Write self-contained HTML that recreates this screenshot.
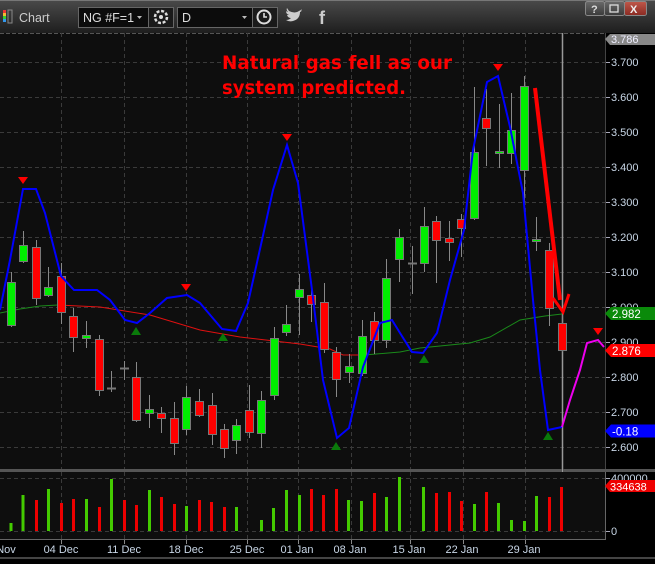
<!DOCTYPE html>
<html><head><meta charset="utf-8"><style>
html,body{margin:0;padding:0;background:#000;}
body{width:655px;height:559px;overflow:hidden;font-family:"Liberation Sans",sans-serif;}
</style></head><body>
<svg width="655" height="559" viewBox="0 0 655 559" xmlns="http://www.w3.org/2000/svg" font-family="Liberation Sans, sans-serif">
<defs>
<linearGradient id="tb" x1="0" y1="0" x2="0" y2="1"><stop offset="0" stop-color="#4a4a4a"/><stop offset="1" stop-color="#1e1e1e"/></linearGradient>
<linearGradient id="btn" x1="0" y1="0" x2="0" y2="1"><stop offset="0" stop-color="#6a6a6a"/><stop offset="1" stop-color="#3a3a3a"/></linearGradient>
<linearGradient id="btnx" x1="0" y1="0" x2="0" y2="1"><stop offset="0" stop-color="#c0584a"/><stop offset="1" stop-color="#8a2a22"/></linearGradient>
</defs>
<rect width="655" height="559" fill="#000"/>
<rect x="0" y="0" width="655" height="33" fill="url(#tb)"/>
<rect x="0" y="0" width="655" height="1" fill="#777"/>
<rect x="3" y="10" width="3" height="3" fill="#e33"/><rect x="3" y="13" width="3" height="3" fill="#eb3"/><rect x="3" y="16" width="3" height="3" fill="#3c3"/><rect x="3" y="19" width="3" height="3" fill="#39e"/>
<rect x="8" y="10" width="4" height="13" fill="none" stroke="#888" stroke-width="1"/>
<text x="19" y="22" fill="#ccc" font-size="12.5">Chart</text>
<rect x="78.5" y="7.5" width="70" height="20" fill="#0c0c0c" stroke="#666"/>
<text x="83" y="22" fill="#ddd" font-size="12.5">NG #F=1</text>
<path d="M137 16 l5 0 l-2.5 3z" fill="#bbb"/>
<rect x="148.5" y="7.5" width="25" height="20" fill="#1a1a1a" stroke="#666"/>
<circle cx="161" cy="17" r="6" fill="none" stroke="#ddd" stroke-width="2.5" stroke-dasharray="3 1.7"/>
<circle cx="161" cy="17" r="2" fill="#ddd"/>
<rect x="177.5" y="7.5" width="75" height="20" fill="#0c0c0c" stroke="#666"/>
<text x="182" y="22" fill="#ddd" font-size="12.5">D</text>
<path d="M242 16 l5 0 l-2.5 3z" fill="#bbb"/>
<rect x="252.5" y="7.5" width="25" height="20" fill="#1a1a1a" stroke="#666"/>
<circle cx="264" cy="17" r="6.5" fill="none" stroke="#ddd" stroke-width="2"/>
<path d="M264 13 v4 h3" stroke="#ddd" stroke-width="1.6" fill="none"/>
<path d="M289 11 q6 3 10 0 q2 -1 3 -2 q-1 2 -2 2 q1 0 2 -1 q-1 2 -2 2 q0 7 -7 9 q-4 1 -7 -1 q3 0 5 -2 q-3 0 -4 -3 q1 0 2 0 q-3 -1 -3 -4 q1 1 2 1 q-2 -2 -1 -4z" fill="#ccc"/>
<text x="319" y="24" fill="#ccc" font-size="18" font-weight="bold">f</text>
<rect x="585.5" y="1.5" width="19" height="14" rx="2" fill="url(#btn)" stroke="#888"/>
<text x="591" y="13" fill="#ddd" font-size="11" font-weight="bold">?</text>
<rect x="604.5" y="1.5" width="20" height="14" rx="2" fill="url(#btn)" stroke="#888"/>
<rect x="610" y="5" width="8" height="7" fill="none" stroke="#ddd" stroke-width="1.3"/>
<rect x="624.5" y="1.5" width="22" height="14" rx="2" fill="url(#btnx)" stroke="#888"/>
<text x="630" y="13" fill="#eee" font-size="11" font-weight="bold">X</text>
<rect x="0" y="33" width="605" height="436" fill="#0e0e0e"/>
<line x1="0" y1="33.5" x2="605" y2="33.5" stroke="#555" stroke-dasharray="4 2"/>
<g stroke="#3a3a3a" stroke-dasharray="4 3" stroke-width="1">
<line x1="0" y1="62.5" x2="605" y2="62.5"/><line x1="0" y1="97.5" x2="605" y2="97.5"/><line x1="0" y1="132.5" x2="605" y2="132.5"/><line x1="0" y1="167.5" x2="605" y2="167.5"/><line x1="0" y1="202.5" x2="605" y2="202.5"/><line x1="0" y1="237.5" x2="605" y2="237.5"/><line x1="0" y1="272.5" x2="605" y2="272.5"/><line x1="0" y1="307.5" x2="605" y2="307.5"/><line x1="0" y1="342.5" x2="605" y2="342.5"/><line x1="0" y1="377.5" x2="605" y2="377.5"/><line x1="0" y1="412.5" x2="605" y2="412.5"/><line x1="0" y1="447.5" x2="605" y2="447.5"/>
<line x1="61.5" y1="33" x2="61.5" y2="469"/><line x1="124.5" y1="33" x2="124.5" y2="469"/><line x1="186.5" y1="33" x2="186.5" y2="469"/><line x1="247.5" y1="33" x2="247.5" y2="469"/><line x1="298.5" y1="33" x2="298.5" y2="469"/><line x1="351.5" y1="33" x2="351.5" y2="469"/><line x1="410.5" y1="33" x2="410.5" y2="469"/><line x1="463.5" y1="33" x2="463.5" y2="469"/><line x1="525.5" y1="33" x2="525.5" y2="469"/>
</g>
<line x1="562.5" y1="33" x2="562.5" y2="469" stroke="#999" stroke-width="1.5"/>
<polyline points="0,313 20,309 40,306 58,305" fill="none" stroke="#1a8a1a" stroke-width="1"/>
<polyline points="58,305 100,307 150,315 200,330 240,337 300,344 330,349 343,355 364,355" fill="none" stroke="#e01010" stroke-width="1"/>
<polyline points="364,355 400,352 420,348 470,343 490,337 520,320 545,316 562,314" fill="none" stroke="#1a8a1a" stroke-width="1"/>
<g stroke="#888" stroke-width="1">
<line x1="11.5" y1="272" x2="11.5" y2="327"/><line x1="23.5" y1="231" x2="23.5" y2="263"/><line x1="36.5" y1="240" x2="36.5" y2="305"/><line x1="48.5" y1="267" x2="48.5" y2="297"/><line x1="61.5" y1="263" x2="61.5" y2="324"/><line x1="73.5" y1="308" x2="73.5" y2="352"/><line x1="86.5" y1="321" x2="86.5" y2="348"/><line x1="99.5" y1="335" x2="99.5" y2="396"/><line x1="111.5" y1="371" x2="111.5" y2="392"/><line x1="124.5" y1="361" x2="124.5" y2="380"/><line x1="136.5" y1="362" x2="136.5" y2="422"/><line x1="149.5" y1="395" x2="149.5" y2="428"/><line x1="161.5" y1="407" x2="161.5" y2="433"/><line x1="174.5" y1="402" x2="174.5" y2="455"/><line x1="186.5" y1="386" x2="186.5" y2="435"/><line x1="199.5" y1="389" x2="199.5" y2="417"/><line x1="212.5" y1="393" x2="212.5" y2="445"/><line x1="224.5" y1="424" x2="224.5" y2="458"/><line x1="236.5" y1="419" x2="236.5" y2="454"/><line x1="249.5" y1="385" x2="249.5" y2="438"/><line x1="261.5" y1="391" x2="261.5" y2="448"/><line x1="274.5" y1="327" x2="274.5" y2="400"/><line x1="286.5" y1="305" x2="286.5" y2="336"/><line x1="299.5" y1="274" x2="299.5" y2="335"/><line x1="311.5" y1="289" x2="311.5" y2="322"/><line x1="324.5" y1="283" x2="324.5" y2="353"/><line x1="336.5" y1="347" x2="336.5" y2="397"/><line x1="349.5" y1="354" x2="349.5" y2="383"/><line x1="362.5" y1="320" x2="362.5" y2="376"/><line x1="374.5" y1="312" x2="374.5" y2="354"/><line x1="386.5" y1="259" x2="386.5" y2="348"/><line x1="399.5" y1="229" x2="399.5" y2="282"/><line x1="412.5" y1="246" x2="412.5" y2="294"/><line x1="424.5" y1="207" x2="424.5" y2="272"/><line x1="436.5" y1="216" x2="436.5" y2="283"/><line x1="449.5" y1="221" x2="449.5" y2="261"/><line x1="461.5" y1="214" x2="461.5" y2="257"/><line x1="474.5" y1="87" x2="474.5" y2="220"/><line x1="486.5" y1="89" x2="486.5" y2="166"/><line x1="499.5" y1="104" x2="499.5" y2="168"/><line x1="511.5" y1="93" x2="511.5" y2="164"/><line x1="524.5" y1="76" x2="524.5" y2="203"/><line x1="536.5" y1="217" x2="536.5" y2="251"/><line x1="549.5" y1="243" x2="549.5" y2="326"/><line x1="562.5" y1="313" x2="562.5" y2="352"/>
</g>
<g stroke="#777" stroke-width="1">
<rect x="7.5" y="282.5" width="8" height="43" fill="#00ee00"/><rect x="19.5" y="245.5" width="8" height="16" fill="#00ee00"/><rect x="32.5" y="247.5" width="8" height="51" fill="#f00"/><rect x="44.5" y="287.5" width="8" height="8" fill="#00ee00"/><rect x="57.5" y="276.5" width="8" height="36" fill="#f00"/><rect x="69.5" y="316.5" width="8" height="21" fill="#f00"/><rect x="82.5" y="335.5" width="8" height="3" fill="#00ee00"/><rect x="95.5" y="339.5" width="8" height="51" fill="#f00"/><rect x="107.5" y="388" width="8" height="1" fill="#888"/><rect x="120.5" y="368" width="8" height="1" fill="#888"/><rect x="132.5" y="377.5" width="8" height="43" fill="#f00"/><rect x="145.5" y="409.5" width="8" height="4" fill="#00ee00"/><rect x="157.5" y="413.5" width="8" height="5" fill="#f00"/><rect x="170.5" y="418.5" width="8" height="25" fill="#f00"/><rect x="182.5" y="397.5" width="8" height="32" fill="#00ee00"/><rect x="195.5" y="401.5" width="8" height="14" fill="#f00"/><rect x="208.5" y="405.5" width="8" height="29" fill="#f00"/><rect x="220.5" y="429.5" width="8" height="19" fill="#f00"/><rect x="232.5" y="425.5" width="8" height="15" fill="#00ee00"/><rect x="245.5" y="410.5" width="8" height="22" fill="#f00"/><rect x="257.5" y="400.5" width="8" height="33" fill="#00ee00"/><rect x="270.5" y="338.5" width="8" height="57" fill="#00ee00"/><rect x="282.5" y="324.5" width="8" height="8" fill="#00ee00"/><rect x="295.5" y="289.5" width="8" height="8" fill="#00ee00"/><rect x="307.5" y="295.5" width="8" height="9" fill="#f00"/><rect x="320.5" y="302.5" width="8" height="47" fill="#f00"/><rect x="332.5" y="352.5" width="8" height="27" fill="#f00"/><rect x="345.5" y="366.5" width="8" height="6" fill="#00ee00"/><rect x="358.5" y="336.5" width="8" height="37" fill="#00ee00"/><rect x="370.5" y="321.5" width="8" height="19" fill="#f00"/><rect x="382.5" y="278.5" width="8" height="62" fill="#00ee00"/><rect x="395.5" y="237.5" width="8" height="22" fill="#00ee00"/><rect x="408.5" y="263" width="8" height="1" fill="#888"/><rect x="420.5" y="226.5" width="8" height="37" fill="#00ee00"/><rect x="432.5" y="221.5" width="8" height="19" fill="#f00"/><rect x="445.5" y="238.5" width="8" height="4" fill="#f00"/><rect x="457.5" y="219.5" width="8" height="9" fill="#f00"/><rect x="470.5" y="152.5" width="8" height="66" fill="#00ee00"/><rect x="482.5" y="118.5" width="8" height="10" fill="#f00"/><rect x="495.5" y="151.5" width="8" height="2" fill="#00ee00"/><rect x="507.5" y="130.5" width="8" height="23" fill="#00ee00"/><rect x="520.5" y="86.5" width="8" height="84" fill="#00ee00"/><rect x="532.5" y="239.5" width="8" height="2" fill="#00ee00"/><rect x="545.5" y="250.5" width="8" height="58" fill="#f00"/><rect x="558.5" y="323.5" width="8" height="27" fill="#f00"/>
</g>
<polyline points="0,310 10,260 23,189 36,189 45,213 61,276 74,290 97,290 110,300 125,320 137,323 150,313 167,298 187,295 200,303 222,329 236,331 248,303 262,240 273,190 287,145 298,183 312,290 323,380 337,438 349,428 363,367 380,323 392,320 400,333 412,352 423,353 437,333 450,280 464,230 473,150 487,82 498,76 510,127 523,193 533,300 540,370 548,430 562,427" fill="none" stroke="#0000ff" stroke-width="2"/>
<polyline points="562,427 570,400 580,370 587,343 598,340 604,347" fill="none" stroke="#ee00ee" stroke-width="2"/>
<g fill="#f00"><path d="M18,177 h10 l-5,7z"/><path d="M181,284 h10 l-5,7z"/><path d="M282,134 h10 l-5,7z"/><path d="M493,64 h10 l-5,7z"/><path d="M593,328 h10 l-5,7z"/></g>
<g fill="#0a7a0a"><path d="M131,335 h10 l-5,-8z"/><path d="M218,341 h10 l-5,-8z"/><path d="M331,450 h10 l-5,-8z"/><path d="M419,363 h10 l-5,-8z"/><path d="M543,440 h10 l-5,-8z"/></g>
<line x1="535" y1="88" x2="560" y2="300" stroke="#f00" stroke-width="4"/>
<path d="M553,298 L563,312 L569,294" fill="none" stroke="#f00" stroke-width="3"/>
<text x="222" y="69" fill="#f00" font-size="19" font-weight="bold" font-family="DejaVu Sans, sans-serif" textLength="230" lengthAdjust="spacingAndGlyphs">Natural gas fell as our</text>
<text x="222" y="94" fill="#f00" font-size="19" font-weight="bold" font-family="DejaVu Sans, sans-serif" textLength="184" lengthAdjust="spacingAndGlyphs">system predicted.</text>
<rect x="605" y="33" width="50" height="436" fill="#000"/>
<line x1="605.5" y1="33" x2="605.5" y2="469" stroke="#444"/>
<g stroke="#aab" stroke-width="1"><line x1="606" y1="62.5" x2="610" y2="62.5"/><line x1="606" y1="97.5" x2="610" y2="97.5"/><line x1="606" y1="132.5" x2="610" y2="132.5"/><line x1="606" y1="167.5" x2="610" y2="167.5"/><line x1="606" y1="202.5" x2="610" y2="202.5"/><line x1="606" y1="237.5" x2="610" y2="237.5"/><line x1="606" y1="272.5" x2="610" y2="272.5"/><line x1="606" y1="307.5" x2="610" y2="307.5"/><line x1="606" y1="342.5" x2="610" y2="342.5"/><line x1="606" y1="377.5" x2="610" y2="377.5"/><line x1="606" y1="412.5" x2="610" y2="412.5"/><line x1="606" y1="447.5" x2="610" y2="447.5"/></g>
<g fill="#c8d6e6" font-size="11"><text x="611" y="66">3.700</text><text x="611" y="101">3.600</text><text x="611" y="136">3.500</text><text x="611" y="171">3.400</text><text x="611" y="206">3.300</text><text x="611" y="241">3.200</text><text x="611" y="276">3.100</text><text x="611" y="311">3.000</text><text x="611" y="346">2.900</text><text x="611" y="381">2.800</text><text x="611" y="416">2.700</text><text x="611" y="451">2.600</text></g>
<path d="M605,39 l5,-5 h45 v11 h-45z" fill="#888"/><text x="611" y="43" fill="#eef" font-size="11">3.786</text>
<path d="M605,313.5 l6,-6.5 h44 v13 h-44z" fill="#0a8a0a"/><text x="612" y="318" fill="#fff" font-size="11.5">2.982</text>
<path d="M605,350.5 l6,-6.5 h44 v13 h-44z" fill="#f00"/><text x="612" y="355" fill="#fff" font-size="11.5">2.876</text>
<path d="M605,431 l6,-6.5 h44 v13 h-44z" fill="#0000ff"/><text x="612" y="435.5" fill="#fff" font-size="11.5">-0.18</text>
<rect x="0" y="469" width="655" height="3" fill="#555"/>
<rect x="0" y="472" width="605" height="68" fill="#0e0e0e"/>
<rect x="605" y="472" width="50" height="68" fill="#000"/>
<line x1="605.5" y1="472" x2="605.5" y2="540" stroke="#666"/>
<line x1="0" y1="539.5" x2="605" y2="539.5" stroke="#666"/>
<g stroke="#3a3a3a" stroke-dasharray="4 3"><line x1="0" y1="478.5" x2="605" y2="478.5"/><line x1="0" y1="531.5" x2="605" y2="531.5"/>
<line x1="61.5" y1="472" x2="61.5" y2="540"/><line x1="124.5" y1="472" x2="124.5" y2="540"/><line x1="186.5" y1="472" x2="186.5" y2="540"/><line x1="247.5" y1="472" x2="247.5" y2="540"/><line x1="298.5" y1="472" x2="298.5" y2="540"/><line x1="351.5" y1="472" x2="351.5" y2="540"/><line x1="410.5" y1="472" x2="410.5" y2="540"/><line x1="463.5" y1="472" x2="463.5" y2="540"/><line x1="525.5" y1="472" x2="525.5" y2="540"/></g>
<g>
<rect x="9.5" y="523" width="3" height="8" fill="#44cc00"/><rect x="21.5" y="495" width="3" height="36" fill="#44cc00"/><rect x="35" y="500" width="3" height="31" fill="#e00"/><rect x="47" y="489" width="3" height="42" fill="#44cc00"/><rect x="60" y="503" width="3" height="28" fill="#e00"/><rect x="72" y="499" width="3" height="32" fill="#e00"/><rect x="85" y="499" width="3" height="32" fill="#44cc00"/><rect x="98" y="507" width="3" height="24" fill="#e00"/><rect x="110" y="479" width="3" height="52" fill="#44cc00"/><rect x="123" y="500" width="3" height="31" fill="#e00"/><rect x="135" y="505" width="3" height="26" fill="#e00"/><rect x="148" y="490" width="3" height="41" fill="#44cc00"/><rect x="160" y="497" width="3" height="34" fill="#e00"/><rect x="173" y="504" width="3" height="27" fill="#e00"/><rect x="185" y="506" width="3" height="25" fill="#44cc00"/><rect x="198" y="500" width="3" height="31" fill="#e00"/><rect x="210" y="502" width="3" height="29" fill="#e00"/><rect x="223" y="507" width="3" height="24" fill="#e00"/><rect x="235" y="507" width="3" height="24" fill="#44cc00"/><rect x="260" y="520" width="3" height="11" fill="#44cc00"/><rect x="272" y="508" width="3" height="23" fill="#44cc00"/><rect x="285" y="490" width="3" height="41" fill="#44cc00"/><rect x="298" y="495" width="3" height="36" fill="#44cc00"/><rect x="310" y="489" width="3" height="42" fill="#e00"/><rect x="322" y="495" width="3" height="36" fill="#e00"/><rect x="335" y="489" width="3" height="42" fill="#e00"/><rect x="347" y="500" width="3" height="31" fill="#44cc00"/><rect x="360" y="501" width="3" height="30" fill="#44cc00"/><rect x="373" y="493" width="3" height="38" fill="#e00"/><rect x="385" y="497" width="3" height="34" fill="#44cc00"/><rect x="398" y="477" width="3" height="54" fill="#44cc00"/><rect x="422" y="487" width="3" height="44" fill="#44cc00"/><rect x="435" y="493" width="3" height="38" fill="#e00"/><rect x="448" y="492" width="3" height="39" fill="#e00"/><rect x="460" y="501" width="3" height="30" fill="#e00"/><rect x="473" y="504" width="3" height="27" fill="#44cc00"/><rect x="485" y="492" width="3" height="39" fill="#e00"/><rect x="497" y="503" width="3" height="28" fill="#44cc00"/><rect x="510" y="520" width="3" height="11" fill="#44cc00"/><rect x="523" y="521" width="3" height="10" fill="#44cc00"/><rect x="535" y="496" width="3" height="35" fill="#44cc00"/><rect x="548" y="497" width="3" height="34" fill="#e00"/><rect x="560" y="487" width="3" height="44" fill="#e00"/>
</g>
<line x1="562.5" y1="469" x2="562.5" y2="472" stroke="#999"/>
<g fill="#c8d6e6" font-size="11"><text x="611" y="482">400000</text><text x="611" y="535">0</text></g>
<line x1="606" y1="531.5" x2="610" y2="531.5" stroke="#aab"/><line x1="606" y1="478.5" x2="610" y2="478.5" stroke="#aab"/>
<path d="M605,486 l5,-6 h45 v12 h-45z" fill="#e00"/><text x="610" y="490.5" fill="#fff" font-size="11">334638</text>
<rect x="0" y="540" width="655" height="19" fill="#000"/>
<g stroke="#888"><line x1="61.5" y1="540" x2="61.5" y2="544"/><line x1="124.5" y1="540" x2="124.5" y2="544"/><line x1="186.5" y1="540" x2="186.5" y2="544"/><line x1="247.5" y1="540" x2="247.5" y2="544"/><line x1="298.5" y1="540" x2="298.5" y2="544"/><line x1="351.5" y1="540" x2="351.5" y2="544"/><line x1="410.5" y1="540" x2="410.5" y2="544"/><line x1="463.5" y1="540" x2="463.5" y2="544"/><line x1="525.5" y1="540" x2="525.5" y2="544"/></g>
<g fill="#c8d6e6" font-size="11" text-anchor="middle"><text x="6" y="553">Nov</text><text x="61" y="553">04 Dec</text><text x="124" y="553">11 Dec</text><text x="186" y="553">18 Dec</text><text x="247" y="553">25 Dec</text><text x="297" y="553">01 Jan</text><text x="350" y="553">08 Jan</text><text x="409" y="553">15 Jan</text><text x="462" y="553">22 Jan</text><text x="524" y="553">29 Jan</text></g>
<rect x="0" y="557" width="655" height="2" fill="#444"/>
</svg>
</body></html>
